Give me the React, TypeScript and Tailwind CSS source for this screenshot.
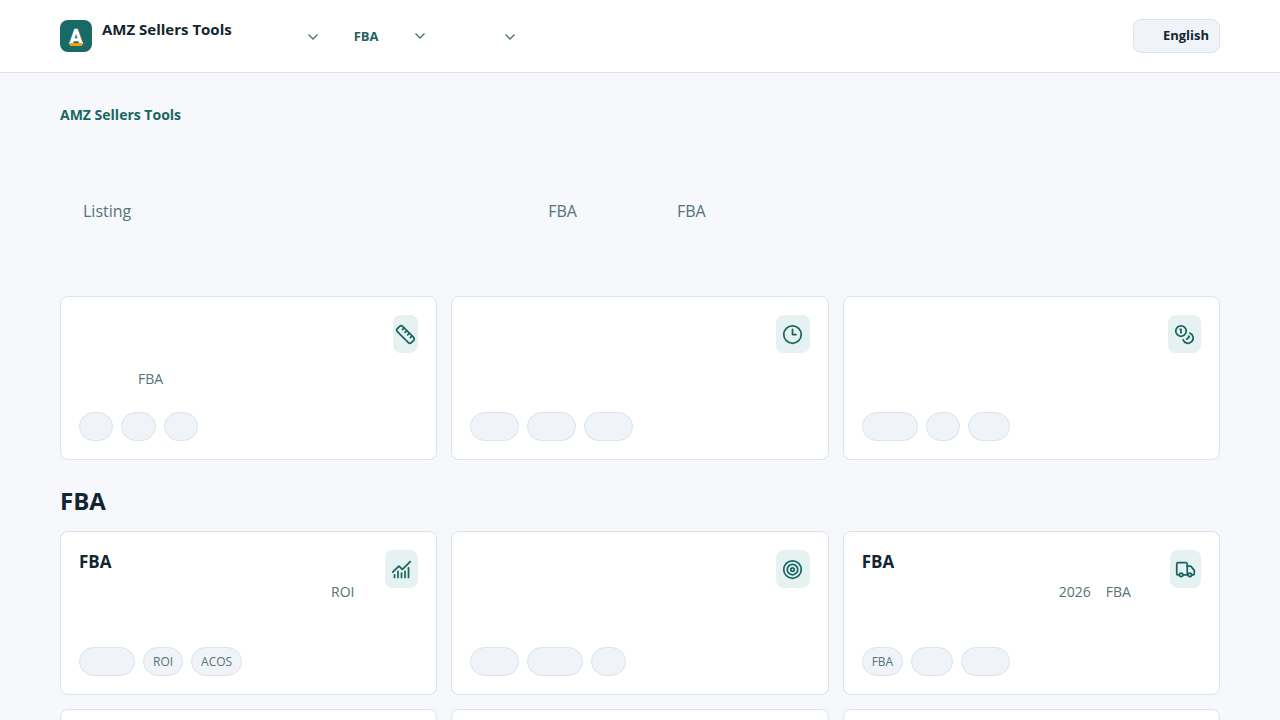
import { ChartNoAxesCombined, Clock3, Coins, Ruler, Target, Truck, type LucideIcon } from "lucide-react";
import clsx from "clsx";

type Token = { text?: string; gap?: string };

type Chip = { text?: string; width?: string };

type Tool = {
  id: string;
  title?: string;
  icon?: LucideIcon;
  iconWidth?: string;
  lines: Token[][];
  chips: Chip[];
};

const FEATURED: Tool[] = [
  {
    id: "size",
    icon: Ruler,
    iconWidth: "w-[25px]",
    lines: [[], [{ gap: "w-[59px]" }, { text: "FBA" }]],
    chips: [{ width: "w-[34px]" }, { width: "w-[35px]" }, { width: "w-[34px]" }],
  },
  {
    id: "time",
    icon: Clock3,
    iconWidth: "w-[34px]",
    lines: [[], []],
    chips: [{ width: "w-[49px]" }, { width: "w-[49px]" }, { width: "w-[49px]" }],
  },
  {
    id: "currency",
    icon: Coins,
    iconWidth: "w-[33px]",
    lines: [[], []],
    chips: [{ width: "w-[56px]" }, { width: "w-[34px]" }, { width: "w-[42px]" }],
  },
];

const FBA_TOOLS: Tool[] = [
  {
    id: "profit",
    title: "FBA",
    icon: ChartNoAxesCombined,
    iconWidth: "w-[33px]",
    lines: [[{ gap: "w-[252px]" }, { text: "ROI" }], []],
    chips: [{ width: "w-[56px]" }, { text: "ROI" }, { text: "ACOS" }],
  },
  {
    id: "ads",
    icon: Target,
    iconWidth: "w-[34px]",
    lines: [[], []],
    chips: [{ width: "w-[49px]" }, { width: "w-[56px]" }, { width: "w-[35px]" }],
  },
  {
    id: "shipping",
    title: "FBA",
    icon: Truck,
    iconWidth: "w-[31px]",
    lines: [[{ gap: "w-[197px]" }, { text: "2026" }, { gap: "w-[15px]" }, { text: "FBA" }], []],
    chips: [{ text: "FBA" }, { width: "w-[42px]" }, { width: "w-[49px]" }],
  },
  { id: "more-1", lines: [[], []], chips: [] },
  { id: "more-2", lines: [[], []], chips: [] },
  { id: "more-3", lines: [[], []], chips: [] },
];

function Line({ tokens }: { tokens: Token[] }) {
  return (
    <span className="flex h-[22px] items-center whitespace-nowrap">
      {tokens.map((token, i) => (
        <span key={i} className={clsx("shrink-0", token.gap)}>
          {token.text}
        </span>
      ))}
    </span>
  );
}

function ToolCard({ tool }: { tool: Tool }) {
  const Icon = tool.icon;
  return (
    <a
      href={`#${tool.id}`}
      className="flex min-h-[164px] flex-col justify-between rounded-lg border border-[#dae4ea] bg-white p-[18px]"
    >
      <div className="flex items-start justify-between">
        <div className="min-w-0">
          <h3 className="mb-2 h-[23px] text-[17px] leading-[23px] font-bold">{tool.title}</h3>
          <p className="text-sm leading-[22px] text-[#56727a]">
            {tool.lines.map((tokens, i) => (
              <Line key={i} tokens={tokens} />
            ))}
          </p>
        </div>
        {Icon && (
          <span
            className={clsx(
              "flex h-[38px] shrink-0 items-center justify-center rounded-lg bg-[#e6f2f1] text-[#186660]",
              tool.iconWidth,
            )}
          >
            <Icon size={21} className="shrink-0" aria-hidden="true" />
          </span>
        )}
      </div>
      <div className="flex flex-wrap gap-2">
        {tool.chips.map((chip, i) => (
          <span
            key={i}
            className={clsx(
              "h-[29px] rounded-full border border-[#dae4ea] bg-[#f0f4f9] text-xs leading-[27px] text-[#56727a]",
              chip.text ? "px-[9px]" : chip.width,
            )}
          >
            {chip.text}
          </span>
        ))}
      </div>
    </a>
  );
}

function Logo() {
  return (
    <svg width="32" height="32" viewBox="0 0 32 32" aria-hidden="true">
      <rect width="32" height="32" rx="8" fill="#186b64" />
      <text
        x="16"
        y="24"
        textAnchor="middle"
        fontFamily="Roboto, sans-serif"
        fontSize="20"
        fontWeight="700"
        fill="#fff"
        stroke="#fff"
        strokeWidth="0.5"
      >
        A
      </text>
      <rect x="10" y="23" width="12" height="3" fill="#f0a010" />
    </svg>
  );
}

function Chevron() {
  return (
    <svg
      width="10"
      height="6"
      viewBox="0 0 10 6"
      fill="none"
      stroke="#4a7078"
      strokeWidth="1.3"
      className="mt-px"
      aria-hidden="true"
    >
      <path d="M.5 .5 5 5 9.5 .5" />
    </svg>
  );
}

export default function App() {
  return (
    <div className="min-h-screen bg-[#f6f8fc] font-['Open_Sans',sans-serif] text-[#132530]">
      <header className="border-b border-[#dae4ea] bg-white">
        <div className="mx-auto flex h-18 max-w-[1192px] items-center px-4">
          <a href="#home" className="flex items-center gap-[10px]">
            <Logo />
            <span className="mb-[14px] text-[15px] leading-5 font-bold">AMZ Sellers Tools</span>
          </a>
          <nav className="ml-16 flex items-center text-[13px] leading-5 font-bold text-[#245f60]">
            <button type="button" aria-label="Tools" className="flex h-[34px] w-[22px] items-center justify-end">
              <Chevron />
            </button>
            <button type="button" className="ml-6 flex h-[34px] w-[83px] items-center justify-between pb-px pl-3">
              FBA
              <Chevron />
            </button>
            <button type="button" aria-label="Resources" className="ml-6 flex h-[34px] w-[66px] items-center justify-end">
              <Chevron />
            </button>
          </nav>
          <button
            type="button"
            className="ml-auto flex h-[34px] w-[87px] items-center justify-end rounded-lg border border-[#dae4ea] bg-[#f0f4f9] px-[10px] text-[13px] font-bold"
          >
            English
          </button>
        </div>
      </header>

      <main className="mx-auto max-w-[1192px] px-4 pt-8 pb-12">
        <section className="mb-[74px]">
          <p className="text-sm leading-5 font-bold text-[#186660]">AMZ Sellers Tools</p>
          <p className="mt-[75px] flex h-[22px] items-center text-base leading-[22px] whitespace-nowrap text-[#56727a]">
            <span className="ml-[23px]">Listing</span>
            <span className="ml-[417px]">FBA</span>
            <span className="ml-[100px]">FBA</span>
          </p>
        </section>

        <section className="grid grid-cols-3 gap-[14px]">
          {FEATURED.map((tool) => (
            <ToolCard key={tool.id} tool={tool} />
          ))}
        </section>

        <h2 className="mt-6 mb-[13px] text-2xl leading-[34px] font-bold">FBA</h2>
        <section className="grid grid-cols-3 gap-[14px]">
          {FBA_TOOLS.map((tool) => (
            <ToolCard key={tool.id} tool={tool} />
          ))}
        </section>
      </main>
    </div>
  );
}
